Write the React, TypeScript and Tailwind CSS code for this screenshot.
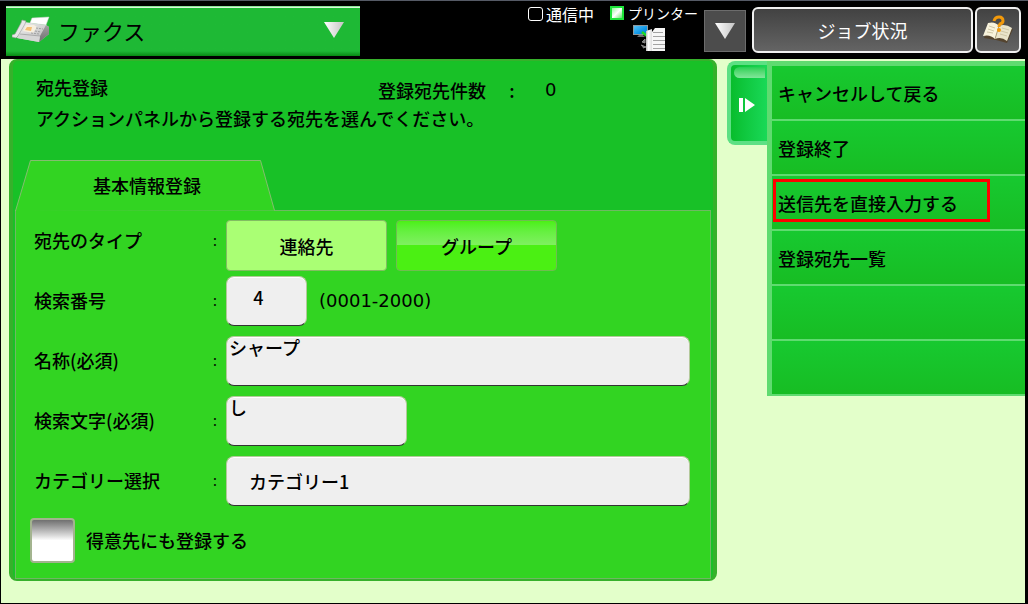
import { useState } from "react";
import type { ReactNode } from "react";

const FIELD =
  "h-[50px] appearance-none rounded-lg border border-[#b3c99b] border-b-[#333] bg-[#efefef] shadow-[inset_0_1px_0_#fff] outline-none";

const ACTIONS = [
  "キャンセルして戻る",
  "登録終了",
  "送信先を直接入力する",
  "登録宛先一覧",
  "",
  "",
];

function FaxIcon() {
  return (
    <svg width="38" height="28" viewBox="0 0 38 28" aria-hidden="true">
      <defs>
        <linearGradient id="faxBody" x1="0" y1="0" x2="1" y2="1">
          <stop offset="0" stopColor="#f4f4f4" />
          <stop offset="1" stopColor="#b4b4b4" />
        </linearGradient>
        <linearGradient id="faxSide" x1="0" y1="0" x2="0" y2="1">
          <stop offset="0" stopColor="#a2a2a2" />
          <stop offset="1" stopColor="#6f6f6f" />
        </linearGradient>
      </defs>
      <path d="M12 6 L34 9 L37 11 V18 L27 26 L5 22Z" fill="url(#faxBody)" />
      <path d="M27 26 L28 20 L34 9 L37 11 V18Z" fill="url(#faxSide)" />
      <path d="M5 22 L8 18 L28 20 L27 26Z" fill="#d6d6d6" />
      <path d="M8 18 L28 20" stroke="#999" strokeWidth=".7" />
      <path d="M0 19 L3 18 L9 7 L10 4 L14 5 L13 8 L6 20 L4 22 L0 21Z" fill="#e6e6e6" stroke="#999" strokeWidth=".6" />
      <path d="M20 2 L37 1 L34 9 L18 7Z" fill="#fff" stroke="#d0d0d0" strokeWidth=".5" />
      <path d="M14 9 L22 9 L25 11 L21 17 L11 15Z" fill="#f7efdf" />
      <path d="M15 11 L20 11 L19 15 L13 14Z" fill="#f3bf73" />
      <path d="M24 12 L31 13 M23 15 L29 16 M19 17 L27 18" stroke="#a0a0a0" strokeDasharray="2 1" />
    </svg>
  );
}

function PrinterIcon() {
  return (
    <svg width="34" height="27" viewBox="0 0 34 27" aria-hidden="true">
      <defs>
        <linearGradient id="screenFill" x1="0" y1="0" x2="1" y2="1">
          <stop offset="0" stopColor="#5cc4f6" />
          <stop offset=".6" stopColor="#0d95e6" />
          <stop offset="1" stopColor="#0780cc" />
        </linearGradient>
        <linearGradient id="pageFill" x1="0" x2="1">
          <stop offset="0" stopColor="#bbb" />
          <stop offset=".4" stopColor="#fff" />
          <stop offset="1" stopColor="#ddd" />
        </linearGradient>
      </defs>
      <rect x=".5" y=".5" width="14" height="9" fill="url(#screenFill)" stroke="#8d979c" />
      <path d="M6 10 H10 L12 12 H4Z" fill="#6c6c6c" />
      <path d="M9 17 L12 14 V18 Z M8 20 L13 22 L10 23" fill="#777" stroke="#8a8a8a" />
      <path d="M9 7 L14 11" stroke="#1fd928" strokeWidth="2.5" />
      <path d="M13 6 L19 4 V26 H13Z" fill="url(#pageFill)" />
      <path d="M19 7 L22 3 H32 V26 H19Z" fill="#f7f7f7" />
      <path d="M20 7.5 H30 M20 11.5 H32 M20 15.5 H32 M20 19.5 H32 M20 23.5 H32" stroke="#a3a3a3" />
    </svg>
  );
}

function HelpBookIcon() {
  return (
    <svg width="32" height="30" viewBox="0 0 32 30" aria-hidden="true">
      <path d="M2 23 L7 9 L17 11 L31 14 L25 28 L14 25Z" fill="#54442f" />
      <path d="M1 21 L6 8 Q13 6 17 11 L13 24 Q8 19 1 21Z" fill="#f8f3dc" />
      <path d="M17 11 Q23 8 30 13 L25 26 Q19 21 13 24Z" fill="#eae4ca" />
      <path d="M17 11 L13 24" stroke="#aaa07d" />
      <path d="M7 11 L13 13 M6 14 L12 16 M5 17 L11 18 M20 13 L27 15 M19 16 L26 18 M18 19 L25 21" stroke="#cfc7a6" />
      <path d="M12 6 Q13 2 17 2 Q21 2 21 6 Q21 8 18 9 Q17 10 17 12" fill="none" stroke="#f39a0b" strokeWidth="3" />
      <circle cx="17" cy="15" r="2" fill="#f39a0b" />
    </svg>
  );
}

function DownTriangle() {
  return (
    <svg width="20" height="16" viewBox="0 0 20 16" aria-hidden="true">
      <defs>
        <linearGradient id="triangleFill" x1="0" y1="0" x2="1" y2="0">
          <stop offset="0" stopColor="#fff" />
          <stop offset="1" stopColor="#c4c4c4" />
        </linearGradient>
      </defs>
      <path d="M0 0 H20 L10 16Z" fill="url(#triangleFill)" />
    </svg>
  );
}

function Header() {
  return (
    <header className="flex h-[59px] items-start border-t border-[#555a66] pr-[7px] pl-[6px] pt-[5px] text-white">
      <button
        type="button"
        className="flex h-[50px] w-[354px] items-center border-t border-[#8fe39a] bg-linear-to-b from-[#1eb935] from-90% to-[#078a12] pr-4 pb-1 pl-[6px] text-[22px] text-black shadow-[inset_0_1px_0_#d8f7dc]"
      >
        <FaxIcon />
        <span className="ml-2">ファクス</span>
        <span className="ml-auto">
          <DownTriangle />
        </span>
      </button>

      <div className="ml-auto flex items-start">
        <div className="flex h-4 items-center text-[16px] leading-4">
          <span className="mr-[3px] h-[14px] w-[15px] rounded-[3px] border border-white" />
          通信中
        </div>
        <div className="ml-4 flex flex-col items-center">
          <div className="flex h-[14px] items-center text-[14px] leading-[14px]">
            <span className="mr-1 size-[14px] border-2 border-[#1ee43a] bg-linear-to-br from-[#8df59a] via-white to-[#4fe264]" />
            プリンター
          </div>
          <span className="mt-[5px] mr-2">
            <PrinterIcon />
          </span>
        </div>
        <button
          type="button"
          aria-label="表示切替"
          className="mt-1 ml-[6px] flex h-[42px] w-[42px] items-center justify-center border border-[#6c6c6c] bg-[#4c4c4c]"
        >
          <DownTriangle />
        </button>
        <button
          type="button"
          className="mt-px ml-[6px] h-[46px] w-[221px] rounded-md border-2 border-[#f0f0f0] bg-linear-to-b from-[#424242] to-[#646464] text-[18px]"
        >
          ジョブ状況
        </button>
        <button
          type="button"
          aria-label="ヘルプ"
          className="mt-px ml-[2px] flex h-[46px] w-[46px] items-center justify-center rounded-md border-2 border-[#f0f0f0] bg-linear-to-b from-[#424242] to-[#646464]"
        >
          <HelpBookIcon />
        </button>
      </div>
    </header>
  );
}

function Row({
  label,
  htmlFor,
  children,
}: {
  label: string;
  htmlFor?: string;
  children: ReactNode;
}) {
  return (
    <div className="flex h-[60px] items-center">
      <label htmlFor={htmlFor} className="w-[179px] shrink-0 pb-[2px]">
        {label}
      </label>
      <span className="w-[13px] shrink-0 pb-[2px] text-[14px] font-normal">:</span>
      {children}
    </div>
  );
}

function RegisterForm() {
  const [type, setType] = useState("contact");

  return (
    <form className="-mt-px border border-[#6fb963] bg-[#32d422] pr-5 pb-[7px] pl-[18px]">
      <Row label="宛先のタイプ">
        <div className="flex h-full items-end gap-[9px]">
          <button
            type="button"
            aria-pressed={type === "contact"}
            onClick={() => setType("contact")}
            className="h-[51px] w-[161px] rounded-[4px] border border-[#82bd62] bg-[#aaff74]"
          >
            連絡先
          </button>
          <button
            type="button"
            aria-pressed={type === "group"}
            onClick={() => setType("group")}
            className="h-[51px] w-[161px] rounded-[4px] border border-[#6fbd50] bg-linear-to-b from-[#4bf013] from-0% via-[#80f060] via-50% to-[#4bf013] to-50%"
          >
            グループ
          </button>
        </div>
      </Row>
      <Row label="検索番号" htmlFor="number">
        <input id="number" defaultValue="4" className={`${FIELD} w-[81px] pr-4 pb-2 text-center`} />
        <span className="ml-3 font-['DejaVu_Sans'] font-normal">(0001-2000)</span>
      </Row>
      <Row label="名称(必須)" htmlFor="name">
        <input id="name" defaultValue="シャープ" className={`${FIELD} w-full pb-7 pl-[2px]`} />
      </Row>
      <Row label="検索文字(必須)" htmlFor="initial">
        <input id="initial" defaultValue="し" className={`${FIELD} w-[181px] pb-7 pl-[2px]`} />
      </Row>
      <Row label="カテゴリー選択" htmlFor="category">
        <select id="category" className={`${FIELD} w-full pl-[22px]`}>
          <option>カテゴリー1</option>
        </select>
      </Row>
      <label className="-ml-1 flex h-[60px] items-center gap-[11px] pb-[2px]">
        <input
          type="checkbox"
          className="size-[45px] appearance-none rounded-[4px] border-2 border-[#a3b48f] bg-linear-to-b from-[#707070] to-white to-50% checked:bg-[#4bf013]"
        />
        得意先にも登録する
      </label>
    </form>
  );
}

function ActionPanel() {
  return (
    <aside className="mt-[2px] flex w-[298px] shrink-0 items-start">
      <button
        type="button"
        aria-label="アクションパネルを閉じる"
        className="flex h-[84px] w-[40px] shrink-0 flex-col items-center rounded-l-lg border-4 border-r-0 border-[#5de084] bg-linear-to-r from-[#08bd2c] to-[#19d957] pt-[2px]"
      >
        <span className="h-[11px] w-[31px] rounded-tl-md rounded-bl-md bg-linear-to-b from-[#20d052] to-[#80e69a]" />
        <svg width="16" height="14" viewBox="0 0 16 14" className="mt-5 mr-1" aria-hidden="true">
          <path d="M0 0 H4 V14 H0Z M6 0 L16 7 L6 14Z" fill="#fff" />
        </svg>
      </button>
      <ul className="flex-1 border-t-[5px] border-l-[5px] border-[#5fdb70]">
        {ACTIONS.map((action, i) => (
          <li key={i} className="relative h-[55px] border-b-2 border-[#5fdb70]">
            <button
              type="button"
              disabled={!action}
              className="block size-full bg-linear-to-b from-[#17c930] to-[#17bd23] pl-[6px] text-left"
            >
              {action}
            </button>
            {i === 2 && (
              <span className="pointer-events-none absolute top-[3px] left-px h-[43px] w-[217px] border-[3px] border-[#f00]" />
            )}
          </li>
        ))}
      </ul>
    </aside>
  );
}

export default function App() {
  return (
    <div
      lang="ja"
      className="flex min-h-screen flex-col bg-black font-['Noto_Sans_CJK_JP',sans-serif] text-[18px] leading-6 text-black"
    >
      <Header />
      <div className="mr-[3px] mb-px ml-px flex flex-1 items-start gap-[10px] bg-[#e3ffca] pl-2 font-medium">
        <main className="min-w-0 flex-1 rounded-lg border-x-4 border-y-2 border-[#36b12b] bg-[#18c127] px-[2px]">
          <div className="h-[98px] px-[21px] pt-[14px]">
            <div className="flex">
              <h1 className="w-[342px]">宛先登録</h1>
              <p className="mt-[3px] flex">
                登録宛先件数
                <span className="w-[52px] text-center">:</span>
                <span className="ml-[7px] font-['DejaVu_Sans'] font-normal">0</span>
              </p>
            </div>
            <p className="mt-1">アクションパネルから登録する宛先を選んでください。</p>
          </div>
          <div role="tablist">
            <button type="button" role="tab" aria-selected="true" className="relative block h-[52px] w-[260px] pl-1">
              <svg width="260" height="52" viewBox="0 0 260 52" className="absolute inset-0 z-10" aria-hidden="true">
                <path d="M0.5 52 L15.5 1.5 H245.5 L259.5 51.5" fill="#32d422" stroke="#85bd70" />
              </svg>
              <span className="relative z-20">基本情報登録</span>
            </button>
          </div>
          <RegisterForm />
        </main>
        <ActionPanel />
      </div>
    </div>
  );
}
